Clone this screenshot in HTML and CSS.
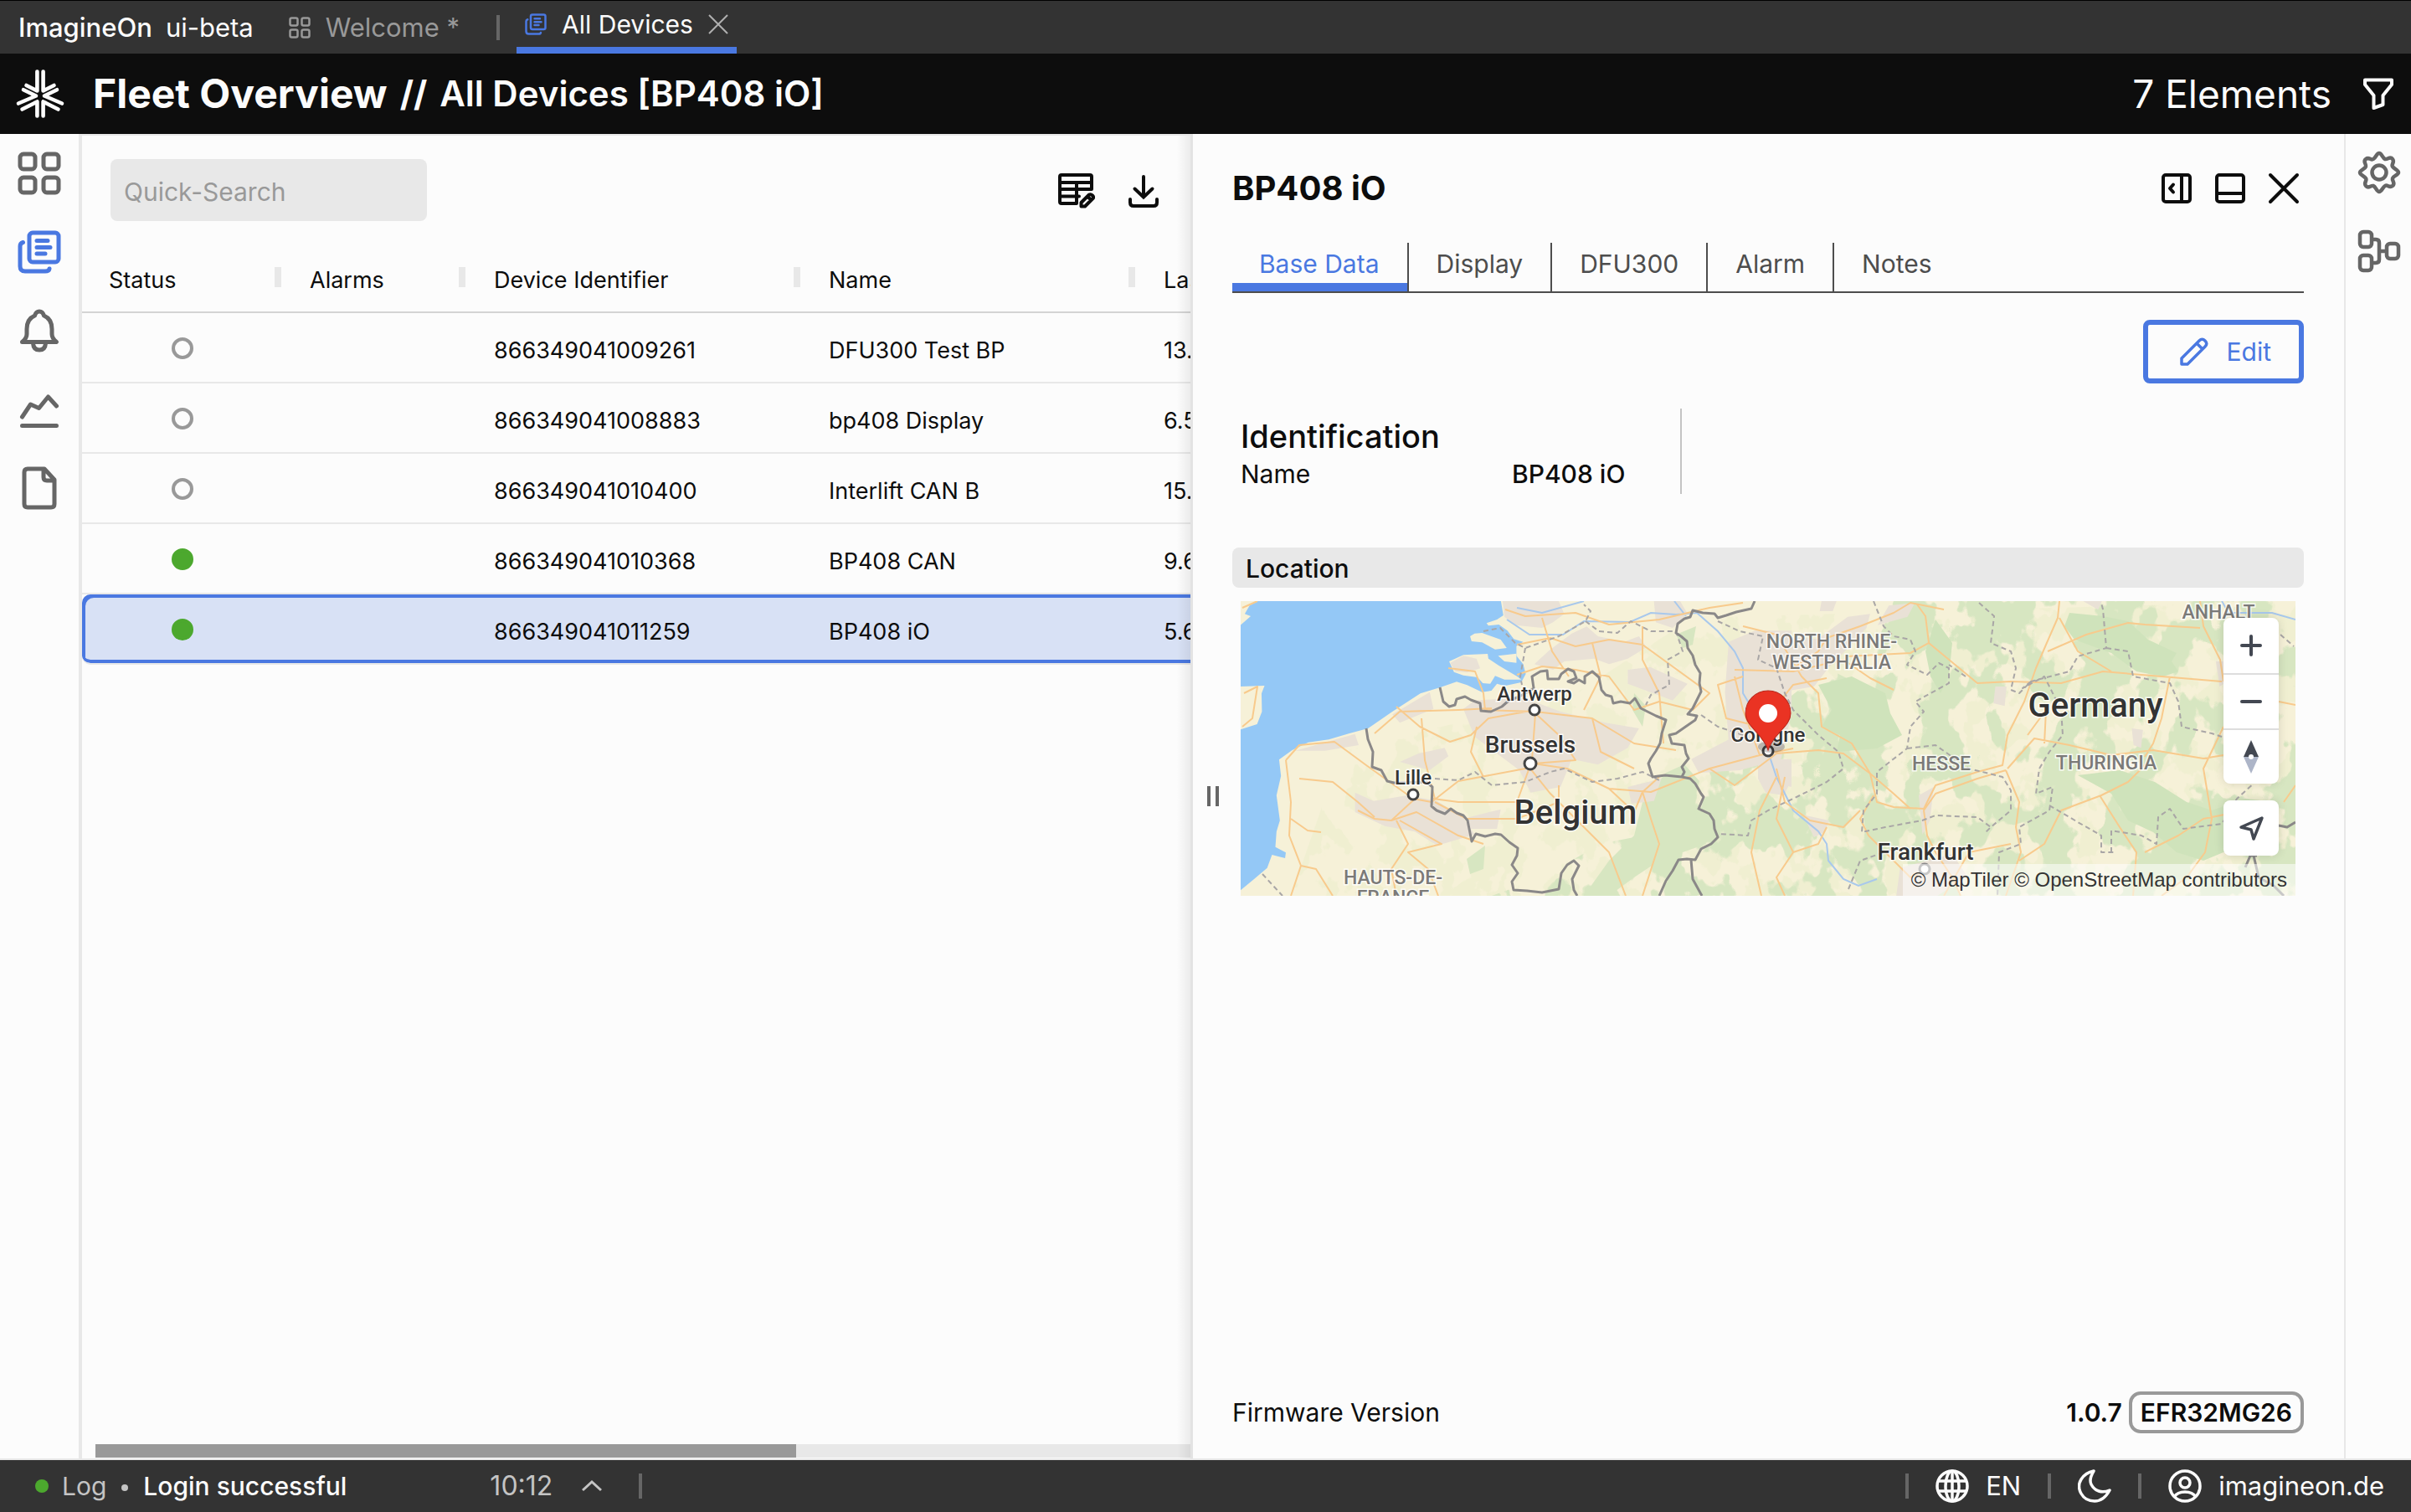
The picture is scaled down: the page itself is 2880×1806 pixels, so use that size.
FILE: index.html
```html
<!DOCTYPE html>
<html lang="en">
<head>
<meta charset="utf-8">
<title>ImagineOn – All Devices</title>
<link rel="stylesheet" href="styles.css">
</head>
<body>
<svg class="defs" aria-hidden="true">
  <symbol id="i-grid" viewBox="0 0 52 52"><g fill="none" stroke="currentColor" stroke-width="5"><rect x="3" y="3" width="18" height="18" rx="4"/><rect x="31" y="3" width="18" height="18" rx="4"/><rect x="3" y="31" width="18" height="18" rx="4"/><rect x="31" y="31" width="18" height="18" rx="4"/></g></symbol>
  <symbol id="i-docs" viewBox="0 0 52 52"><g fill="none" stroke="currentColor" stroke-width="5" stroke-linecap="round"><rect x="14" y="3" width="35" height="35" rx="4"/><path d="M6.500 14.500Q3 15.500 3 19V43Q3 49 9 49H33Q37.500 49 38 46M23 12.500H36M23 20.500H39M23 28H33"/></g></symbol>
</svg>
<div class="app">
  <header class="titlebar">
    <span class="brand">ImagineOn</span>
    <span class="env">ui-beta</span>
    <nav class="wintabs">
      <a class="wintab" href="#welcome"><svg class="ic26"><use href="#i-grid"/></svg>Welcome *</a>
      <span class="divider"></span>
      <span class="wintab wintab-active"><svg class="ic26 blue"><use href="#i-docs"/></svg><a href="#devices">All Devices</a>
        <button class="plain" aria-label="Close tab"><svg class="ic24" viewBox="0 0 24 24"><path d="M1 1 23 23M23 1 1 23" stroke="#b0b0b0" stroke-width="2"/></svg></button></span>
    </nav>
  </header>

  <div class="pagehead">
    <svg class="logo" viewBox="0 0 80 80" fill="none" stroke="#fcfcfc" stroke-width="4.600" stroke-linecap="round" stroke-linejoin="round">
      <path d="M36.400 13.500V36.500L23.500 30M20 35.200 35 42.500 14 51.500M18.500 58.500 36.400 49.500V66.500M36.400 49.500 33 51"/>
      <path d="M43.600 13.500V36.500L56.500 30M60 35.200 45 42.500 66 51.500M61.500 58.500 43.600 49.500V66.500M43.600 49.500 47 51"/>
    </svg>
    <h1>Fleet Overview</h1><span class="slashes">//</span><h2>All Devices [BP408 iO]</h2>
    <span class="count">7 Elements</span>
    <button class="plain" aria-label="Filter"><svg class="ic38" viewBox="0 0 38 38" fill="none" stroke="#fcfcfc" stroke-width="4" stroke-linejoin="round"><path d="M3 2.500H35V8L24.500 21V32L13.500 36V21L3 8Z"/></svg></button>
  </div>

  <main class="body">
    <nav class="rail">
      <a href="#dashboard" aria-label="Dashboard"><svg class="ic52"><use href="#i-grid"/></svg></a>
      <a class="blue" href="#devices" aria-label="Devices"><svg class="ic52"><use href="#i-docs"/></svg></a>
      <a href="#alarms" aria-label="Alarms"><svg class="ic52" viewBox="0 0 52 52" fill="none" stroke="currentColor" stroke-width="5" stroke-linejoin="round"><path d="M5.500 39.500Q11 35 11 30V24Q11 12 20.500 8Q22 3 26 3T31.500 8Q41 12 41 24V30Q41 35 46.500 39.500ZM18.500 41Q19 49 26 49T33.500 41"/></svg></a>
      <a href="#reports" aria-label="Reports"><svg class="ic52" viewBox="0 0 52 52" fill="none" stroke="currentColor" stroke-width="5" stroke-linecap="round" stroke-linejoin="round"><path d="M5.500 35 15.500 20 25.500 24.500 36.500 11 46.500 22M5.500 45.500H46.500"/></svg></a>
      <a href="#files" aria-label="Files"><svg class="ic52" viewBox="0 0 52 52" fill="none" stroke="currentColor" stroke-width="5" stroke-linejoin="round"><path d="M12 3H32L44 16V45Q44 49 40 49H12Q8 49 8 45V7Q8 3 12 3ZM31 4V13Q31 17 35 17H43"/></svg></a>
    </nav>

    <section class="list">
      <div class="toolbar">
        <input class="search" type="text" placeholder="Quick-Search" aria-label="Quick-Search">
        <button class="plain" aria-label="Edit columns"><svg class="ic44" viewBox="0 0 44 44" fill="none" stroke="#0d0d0d" stroke-width="4" stroke-linejoin="round" stroke-linecap="round"><path d="M22 38H4Q2 38 2 36V6Q2 4 4 4H38Q40 4 40 6V21H2M2 13H40M22 13V38M2 29.500H25M27.500 41.500V37L37 27.500Q39 26.500 41 28.500T41.500 32L32 41.500ZM35.500 30 38.500 33"/></svg></button>
        <button class="plain" aria-label="Download"><svg class="ic44" viewBox="0 0 44 44" fill="none" stroke="#0d0d0d" stroke-width="4" stroke-linecap="round"><path d="M22 6V30M11.500 20.500 22 30.500 32.500 20.500M6 33V37Q6 41 10 41H34Q38 41 38 37V33"/></svg></button>
      </div>
      <div class="gridwrap">
        <table class="devices">
          <colgroup><col class="c240"><col class="c220"><col class="c400"><col class="c400"><col class="c400"></colgroup>
          <thead><tr><th>Status</th><th>Alarms</th><th>Device Identifier</th><th>Name</th><th>Last</th></tr></thead>
          <tbody>
            <tr><td><span class="dot"></span></td><td></td><td>866349041009261</td><td>DFU300 Test BP</td><td>13.5.</td></tr>
            <tr><td><span class="dot"></span></td><td></td><td>866349041008883</td><td>bp408 Display</td><td>6.5.</td></tr>
            <tr><td><span class="dot"></span></td><td></td><td>866349041010400</td><td>Interlift CAN B</td><td>15.5.</td></tr>
            <tr><td><span class="dot on"></span></td><td></td><td>866349041010368</td><td>BP408 CAN</td><td>9.6.</td></tr>
            <tr class="selected"><td><span class="dot on"></span></td><td></td><td>866349041011259</td><td>BP408 iO</td><td>5.6.</td></tr>
          </tbody>
        </table>
      </div>
      <div class="hscroll"><span></span></div>
    </section>

    <section class="panel">
      <div class="grip"></div>
      <div class="panelhead">
        <h3>BP408 iO</h3>
        <button class="plain" aria-label="Dock right"><svg class="ic36" viewBox="0 0 36 36" fill="none" stroke="#0d0d0d" stroke-width="4" stroke-linejoin="round"><rect x="2" y="2" width="32" height="32" rx="3"/><path d="M24 2V34M14 13.500 10 18 14 22.500" stroke-linecap="round"/></svg></button>
        <button class="plain" aria-label="Dock bottom"><svg class="ic36" viewBox="0 0 36 36" fill="none" stroke="#0d0d0d" stroke-width="4"><rect x="2" y="2" width="32" height="32" rx="3"/><path d="M2 24H34"/></svg></button>
        <button class="plain" aria-label="Close panel"><svg class="ic36" viewBox="0 0 36 36" stroke="#0d0d0d" stroke-width="4" stroke-linecap="round"><path d="M2 2 34 34M34 2 2 34"/></svg></button>
      </div>
      <nav class="tabs">
        <a class="tab active" href="#base">Base Data</a><a class="tab" href="#display">Display</a><a class="tab" href="#dfu">DFU300</a><a class="tab" href="#alarm">Alarm</a><a class="tab" href="#notes">Notes</a>
      </nav>
      <button class="edit"><svg class="ic34" viewBox="0 0 34 34" fill="none" stroke="currentColor" stroke-width="3.500" stroke-linejoin="round"><path d="M2 32V25L23 4Q26.500 0.500 30 4T30 11L9 32ZM20 7 27 14"/></svg>Edit</button>
      <div class="ident">
        <h4>Identification</h4>
        <dl><dt>Name</dt><dd>BP408 iO</dd></dl>
      </div>
      <h5 class="sectionbar">Location</h5>
      <div class="map">
        <svg class="mapart" viewBox="0 0 1260 352" preserveAspectRatio="xMidYMid slice">
          <defs>
            <filter id="woods" x="0" y="0" width="1" height="1" color-interpolation-filters="sRGB"><feTurbulence type="fractalNoise" baseFrequency=".022 .017" numOctaves="4" seed="8"/><feColorMatrix values="0 0 0 0 .843 0 0 0 0 .902 0 0 0 0 .757 26 0 0 0 -12.600"/><feComposite in2="SourceGraphic" operator="in"/></filter>
            <filter id="meadow" x="0" y="0" width="1" height="1" color-interpolation-filters="sRGB"><feTurbulence type="fractalNoise" baseFrequency=".03 .024" numOctaves="4" seed="21"/><feColorMatrix values="0 0 0 0 .937 0 0 0 0 .937 0 0 0 0 .816 26 0 0 0 -13"/><feComposite in2="SourceGraphic" operator="in"/></filter>
          </defs>
          <rect width="1260" height="352" fill="#f6f1d8"/>
          <!-- vegetation -->
          <path filter="url(#meadow)" d="M120 180 400 110 540 20 1260 0V352H60Z" opacity=".8"/>
          <path filter="url(#woods)" d="M520 240 560 190 700 80 740 100 780 0H1260V352H300L360 330 430 290 480 280Z"/>
          <path fill="#cfe3bb" d="M990 14 1030 18 1060 24 1084 46 1118 62 1112 72 1120 84 1102 90 1070 84 1040 62 996 46 984 30ZM1000 208 1050 202 1092 216 1130 240 1160 250 1200 236 1240 240 1220 270 1174 300 1150 310 1118 300 1090 276 1060 262 1040 230ZM690 100 730 90 770 110 776 134 790 160 760 176 712 180 716 160 694 150 706 130ZM830 22 850 50 846 90 836 110 824 90 818 60Z"/>
          <path fill="#d7e6c1" d="M508 205 530 195 548 215 540 245 556 290 500 310 470 330 440 352H410L440 310 470 280 480 240ZM270 308 292 292 290 320 274 326ZM470 110 484 125 480 150 468 130ZM520 40 544 30 540 52 528 56Z"/>
          <!-- built-up areas -->
          <g transform="translate(-42 -98) scale(.4464 .3333)" fill="#e9e1d6">
            <path d="M795 294H945L960 340 930 370 900 390 830 380 800 350ZM980 410 1020 385 1050 420 1120 440 1160 420 1180 460 1130 500 1080 520 1040 500 960 510 930 540 880 520 920 470 950 440ZM1200 294H1270L1290 340 1250 390 1205 370ZM1130 540 1190 530 1240 560 1290 590 1250 650 1190 620 1130 590ZM650 520 690 495 730 520 710 555 680 560ZM690 680 720 650 850 640 950 690 1070 730 1160 750 1130 820 1050 880 980 860 950 960 870 980 840 900 780 840 720 780ZM520 870 570 840 640 820 650 850 600 900ZM400 980 450 1010 540 990 620 1010 690 1070 720 1130 620 1170 560 1120 480 1100 400 1050ZM1130 960 1220 930 1200 1010 1140 1020ZM700 1070 790 1040 780 1110 710 1110ZM1400 440 1470 400 1568 400V700L1540 860 1430 900 1400 800 1390 620ZM500 700 600 620 610 680 520 730ZM240 830 400 770 410 810 320 830ZM1300 860 1400 790 1480 840 1430 900 1320 910ZM1490 860H1568V960L1510 940Z"/>
          </g>
          <g transform="translate(618 -98) scale(.4464 .3333)" fill="#e9e1d6">
            <path d="M0 440 60 420 160 430 240 350 300 340 290 390 250 450 190 530 150 600 60 620 0 600ZM320 380 350 310 420 300 400 350ZM170 294H210L200 330H165ZM635 600H665L660 670 630 660ZM0 860 60 870 90 930 70 990 20 980 0 930ZM430 990 470 960 460 1080 440 1130ZM120 1060 190 1080 180 1120 150 1140ZM1000 750 1030 755 1025 820 1005 810ZM1225 510H1260V580L1235 600ZM870 294H920L910 325ZM380 1250 520 1200 560 1280 480 1350H370Z"/>
          </g>
          <!-- sea and islands -->
          <g transform="translate(-42 -98) scale(.4464 .3333)">
            <path fill="#94c8f6" d="M94 290H790L797 345 780 360 752 373 757 382 785 378 808 400 825 430 850 440 832 455 832 490 850 520 857 555 845 585 800 598 780 590 765 615 740 620 700 595 672 583 630 602 575 625 500 690 435 750 385 768 330 790 275 800 232 828 197 862 202 920 190 990 199 1080 190 1120 187 1175 215 1195 213 1215 178 1203 165 1250 130 1290 94 1330Z"/>
            <path fill="#f6f1d8" d="M708 420 720 410 740 408 790 432 806 462 775 467 740 442 712 438ZM652 510 690 487 755 483 757 500 785 525 835 565 845 575 800 575 775 562 762 590 742 588 728 567 690 560 665 548ZM783 490 832 482 832 515 800 510ZM94 600 158 597 150 625 151 690 138 735 94 754ZM94 294H140L118 310 105 340 121 348 94 380Z"/>
            <path fill="#e9e1d6" d="M655 515 690 490 725 500 735 535 700 550 668 545Z"/>
          </g>
          <!-- rivers -->
          <path fill="none" stroke="#a8c8ec" stroke-width="2" d="M318 22 345 40 385 40 410 24 465 25 490 14 520 16 545 14 570 36 590 60 600 80 600 110 612 130 630 180 640 210 660 250 690 275 700 290 702 310 720 332 738 340 760 332M330 8 360 14 410 0M1172 0 1180 14 1232 14 1260 22M518 0 532 18"/>
          <!-- roads -->
          <g fill="none" stroke="#f8ca8c" stroke-width="2" stroke-linejoin="round">
            <path d="M316 10 340 18 400 14 440 28 500 22 560 8 600 2M330 52 370 44 400 54 440 46 480 52 560 110 540 130 500 120 470 130 440 90 400 82 360 78 330 88M360 20 372 60 392 90M420 50 430 90 410 130M480 30 480 70 500 110 505 170M248 80 280 84 290 110 292 130 352 132 420 140 470 170 520 178M160 158 190 132 260 130 300 128M186 126 214 150 250 168 275 160 296 140 352 130M352 134 348 190 340 200 260 215 228 240 206 236 150 196 112 168 70 172 54 190M352 134 380 160 400 190 350 194 390 200 440 224 490 228 560 200 620 184 660 176M230 236 260 240 330 240 346 196M216 140 220 190 232 236M232 240 270 260 330 260 380 240 380 220M346 200 370 230 410 270 440 300 460 352M206 238 180 262 160 260 140 250M186 262 200 290 180 320 186 352M190 262 240 290 200 300 224 320 236 352M54 190 60 240 58 280 72 316 60 352M72 316 90 320 110 352M60 260 80 274 96 276M70 212 110 216 140 240 160 258M180 262 210 252 260 280 290 290M480 228 490 260 500 290 480 352M440 224 470 252 480 228 500 210M560 200 590 220 640 182M2 8 20 0M4 110 20 102 14 140 2 150M420 140 430 180 470 200M282 150 275 180 290 210M600 90 570 100 580 140 620 150 660 100 700 92M590 90 600 130 620 184M640 182 690 178 720 182 752 206 780 230 800 248"/>
            <path d="M600 30 640 40 670 90 690 110 694 150 730 170 752 206 760 240 780 246 816 248 830 220 880 204 910 196 916 160 936 120 950 80 962 52 976 20 978 0M660 80 690 60 700 44 740 30 780 14 800 2 840 10M590 82 660 84 720 70 752 92 780 106M724 66 800 62 822 50 818 18 808 4M822 50 880 98 920 96 980 98 1030 84 1100 90 1172 96M964 60 1010 40 1060 26 1080 28 1146 32M978 20 1000 60 1040 84M1146 0 1150 30 1170 70 1174 96M1110 90 1100 140 1090 170 1080 186M916 200 948 164 990 172 1040 184 1090 178 1150 188 1174 184M914 202 930 240 926 270 932 300 914 352M960 170 962 130 940 160M914 202 880 212 830 230 816 250 820 280 830 300 850 330 860 352M756 232 740 260 750 280 800 330 820 320M1090 186 1060 216 1028 232 980 250 960 290 930 310M1026 232 1050 270 1070 300 1066 352M1174 150 1150 200 1160 260 1152 300 1130 330 1100 352M640 200 650 240 680 262 720 270 740 250M650 210 640 260 660 300 690 290 700 270M660 300 640 330 650 352M1240 120 1260 124M1246 240 1260 220M1080 300 1120 280 1150 260 1200 250M840 352 870 300 920 290M622 352 610 300 620 250 640 210"/>
          </g>
          <!-- regional boundaries -->
          <g fill="none" stroke="#a9a6a6" stroke-width="2" stroke-dasharray="6 4" stroke-linejoin="round">
            <path d="M290 36 310 32 328 50 340 56 380 42 412 24 418 12 410 4M412 24 428 36 450 38 466 24 490 36 520 36 528 60 510 70 512 100 490 112 484 124M340 56 334 90 336 100M232 212 260 214 280 204 300 220 340 216 370 204 386 200 420 216 450 212 480 204 500 214M570 24 596 36 624 42 618 70 640 80 650 110 660 130 690 160 714 180 720 200 700 216 660 236 630 250 610 262 606 280 570 278M550 136 570 150 600 160M26 326 50 352M756 0 768 30 780 42 800 46 806 60 796 76 820 88 834 74 846 80 846 98 806 120 816 132 800 150 796 176 760 204 760 230 744 250 742 276 770 270 814 262 830 256 880 258 896 270M882 2 900 18 896 50 920 60 926 80 920 106 930 110 944 96 990 84 1000 66 1034 56 1030 10 1028 2M866 90 846 76M1034 56 1060 60 1066 90 1110 98 1120 120 1124 150 1160 158 1172 162M944 96 934 104 960 90 980 130 982 160 966 180 954 200 950 230 970 222 966 250 930 270 932 290 906 300 904 352M796 176 830 172 870 200 910 210 920 226 920 250 896 270 890 276M966 244 1000 264 1028 280 1028 300 1044 300M1040 300 1040 274 1076 280 1094 290 1096 258 1110 248 1126 272 1172 266 1190 236 1212 216M726 344 740 310 780 296M1242 40 1258 54"/>
          </g>
          <!-- national borders -->
          <g fill="none" stroke="#8a8888" stroke-width="3" stroke-linejoin="round">
            <path d="M238 103 242 120 249 126 256 124 258 117 268 114 275 118 286 122 287 131 299 132 312 126 320 119 333 114 350 104 348 90 358 84 366 83 367 93 380 93 383 87 391 81 398 84 401 92 391 96 398 98 404 94 411 98 411 90 420 84 428 91 431 106 436 112 443 114 445 122 454 120 465 122 471 116 478 128 490 134 496 137 508 142 503 158 501 170 496 179 490 188 487 194 492 210 507 208 527 210M150 152 152 165 158 180 157 198 168 202 175 215 183 217 222 216 229 222 228 245 234 250 244 254 251 248 258 253 266 256 271 262 276 287 281 278 292 281 304 278 311 279 321 288 331 295 330 304 324 315 331 325 324 335 326 345 342 346 360 348 380 344 383 325 390 315 398 310 404 316 396 332 398 345 402 352M614 0 610 9 592 13 580 17 570 20 566 15 552 14 540 11 537 19 530 21 522 27 520 38 526 42 533 48 534 56 540 65 543 76 549 86 548 98 550 108 545 118 540 128 534 135 545 137 543 142 530 151 520 158 512 160 515 170 530 172 532 182 535 188 527 198 530 204 527 210 537 212 543 218 550 230 553 234 547 248 560 254 565 262 566 272 570 282 562 290 550 296 543 309 533 308 523 309 516 322 508 334 500 352M538 309 540 332 551 352M1210 304 1216 330 1234 340 1246 352M1240 268 1250 270 1260 264M1200 318 1206 304 1214 304"/>
          </g>
          <g fill="#fff" stroke="#444" stroke-width="3"><circle cx="351" cy="130" r="6"/><circle cx="346" cy="194" r="7"/><circle cx="206" cy="231" r="6"/><circle cx="630" cy="179" r="6"/><circle cx="817" cy="320" r="6" stroke="#888"/></g>
          <g class="lbl">
            <text class="region" x="706" y="56">NORTH RHINE-</text><text class="region" x="706" y="81">WESTPHALIA</text>
            <text class="region" x="1168" y="21">ANHALT</text><text class="region" x="837" y="202">HESSE</text><text class="region" x="1034" y="201">THURINGIA</text>
            <text class="region" x="182" y="338">HAUTS-DE-</text><text class="region" x="182" y="362">FRANCE</text>
            <text class="city" x="351" y="119">Antwerp</text><text class="city" x="206" y="219">Lille</text><text class="city" x="630" y="168">Cologne</text>
            <text class="capital" x="346" y="181">Brussels</text><text class="capital" x="818" y="309">Frankfurt</text>
            <text class="country" x="400" y="266">Belgium</text><text class="country" x="1021" y="138">Germany</text>
          </g>
          <ellipse cx="634" cy="174" rx="16" ry="7" fill="#000" opacity=".2"/>
          <path d="M630 178C624 158 603 150 603 134A27 27 0 0 1 657 134C657 150 636 158 630 178Z" fill="#ea3323" stroke="#b9271a" stroke-width="1"/><circle cx="630" cy="134" r="11" fill="#fff"/>
        </svg>
        <div class="mapctl">
          <div class="ctlgroup">
            <button aria-label="Zoom in"><svg class="ic36" viewBox="0 0 36 36" stroke="#434852" stroke-width="4" stroke-linecap="round"><path d="M18 7V29M7 18H29"/></svg></button>
            <button aria-label="Zoom out"><svg class="ic36" viewBox="0 0 36 36" stroke="#434852" stroke-width="4" stroke-linecap="round"><path d="M7 18H29"/></svg></button>
            <button aria-label="Reset bearing"><svg class="ic36" viewBox="0 0 36 36"><path d="M18-2 27 18H9Z" fill="#434852"/><path d="M18 38 27 18H9Z" fill="#adb5c8"/><circle cx="18" cy="18" r="3" fill="#fff"/></svg></button>
          </div>
          <div class="ctlgroup">
            <button aria-label="Find my location"><svg class="ic36" viewBox="0 0 36 36" fill="none" stroke="#434852" stroke-width="3.500" stroke-linejoin="round"><path d="M31 6 6 17 18 20 21 31Z"/></svg></button>
          </div>
        </div>
        <div class="attrib"><a href="#maptiler">© MapTiler</a> <a href="#osm">© OpenStreetMap contributors</a></div>
      </div>
      <div class="firmware"><span>Firmware Version</span><b>1.0.7</b><b class="chip">EFR32MG26</b></div>
    </section>

    <nav class="rail rail-right">
      <a href="#settings" aria-label="Settings"><svg class="ic52" viewBox="0 0 52 52" fill="none" stroke="currentColor" stroke-width="4.500" stroke-linejoin="round"><path d="M26 3C29 3 30 9 33 10S39 6 42 10 40 16 42 19 49 23 49 26 43 30 42 33 46 39 42 42 36 40 33 42 29 49 26 49 22 43 19 42 13 46 10 42 12 36 10 33 3 29 3 26 9 22 10 19 6 13 10 10 16 12 19 10 23 3 26 3Z"/><circle cx="26" cy="26" r="8.500"/></svg></a>
      <a href="#topology" aria-label="Topology"><svg class="ic52" viewBox="0 0 52 52" fill="none" stroke="currentColor" stroke-width="4.500"><rect x="3" y="3" width="14" height="18" rx="4"/><rect x="3" y="31" width="14" height="18" rx="4"/><rect x="35" y="17" width="14" height="18" rx="4"/><path d="M17 12H22Q26 12 26 16V36Q26 40 22 40H17M26 26H35"/></svg></a>
    </nav>
  </main>

  <footer class="statusbar">
    <span class="led"></span><span class="muted">Log</span><span class="bullet"></span><span class="msg">Login successful</span>
    <span class="muted time">10:12</span>
    <button class="plain" aria-label="Show log"><svg class="ic24" viewBox="0 0 24 24" fill="none" stroke="#c4c4c4" stroke-width="3"><path d="M1 17 12 7 23 17"/></svg></button>
    <span class="divider"></span>
    <span class="spacer"></span>
    <span class="divider"></span>
    <button class="plain item"><svg class="ic40" viewBox="0 0 40 40" fill="none" stroke="currentColor" stroke-width="3.500"><circle cx="20" cy="20" r="18"/><ellipse cx="20" cy="20" rx="8" ry="18"/><path d="M20 2V38M3 14H37M3 26H37"/></svg>EN</button>
    <span class="divider"></span>
    <button class="plain item" aria-label="Dark mode"><svg class="ic40" viewBox="0 0 40 40" fill="none" stroke="currentColor" stroke-width="3.500" stroke-linejoin="round"><path d="M19 2Q9 4 4 12T4 29 20 38 38 25Q31 28 25 26T16 18 19 2Z"/></svg></button>
    <span class="divider"></span>
    <button class="plain item"><svg class="ic40" viewBox="0 0 40 40" fill="none" stroke="currentColor" stroke-width="3.500"><circle cx="20" cy="20" r="18"/><circle cx="20" cy="16" r="6"/><path d="M7 33Q11 27 20 27T33 33"/></svg>imagineon.de</button>
  </footer>
</div>
</body>
</html>
```
FILE: styles.css
```css
* { box-sizing: border-box; }
body { margin: 0; background: #fcfcfc; color: #0d0d0d; font: 30px/40px Inter, sans-serif; }
h1, h2, h3, h4, h5, dl, dd { margin: 0; }
a { color: inherit; text-decoration: none; }
svg { display: block; flex: none; }
.defs { position: absolute; width: 0; height: 0; }
.plain { display: flex; align-items: center; margin: 0; padding: 0; border: 0; background: none; color: inherit; font: inherit; }
.ic24 { width: 24px; height: 24px; }
.ic26 { width: 26px; height: 26px; }
.ic34 { width: 34px; height: 34px; }
.ic36 { width: 36px; height: 36px; overflow: visible; }
.ic38 { width: 38px; height: 38px; }
.ic40 { width: 40px; height: 40px; }
.ic44 { width: 44px; height: 44px; }
.ic52 { width: 52px; height: 52px; }
.blue { color: #4a78e1; }
.divider { width: 4px; height: 30px; background: #666; }

.app { display: flex; flex-direction: column; min-height: 100vh; }

.titlebar { display: flex; height: 64px; padding-left: 22px; border-top: 1px solid #000; background: #333; color: #fcfcfc; font-size: 31px; line-height: 64px; }
.brand { margin-right: 16px; font-weight: 500; }
.env { margin-right: 42px; }
.wintabs { display: flex; align-items: center; }
.wintab { display: flex; align-items: center; gap: 18px; color: #999; }
.wintabs > .divider { margin: 0 20px 0 44px; }
.wintab-active { height: 63px; padding: 0 10px; border-bottom: 8px solid #4a78e1; color: #fcfcfc; font-size: 30px; line-height: 54px; }

.pagehead { display: flex; align-items: center; height: 96px; padding: 0 20px 0 8px; background: #0d0d0d; color: #fcfcfc; line-height: 56px; }
.logo { width: 80px; height: 80px; margin-right: 23px; }
h1 { font-size: 48px; font-weight: 700; }
.slashes { margin: 0 15px; font-size: 42px; font-weight: 700; }
h2 { font-size: 42px; font-weight: 600; }
.count { margin: 0 37px 0 auto; font-size: 46px; }

.body { flex: 1; display: grid; grid-template-columns: 98px minmax(0, 49fr) minmax(0, 51fr) 80px; }
.rail { display: flex; flex-direction: column; align-items: center; gap: 42px; padding-top: 21px; border-right: 4px solid #e8e8e8; color: #666; }
.rail .blue { color: #4a78e1; }
.rail-right { border-right: 0; border-left: 2px solid #e8e8e8; padding: 20px 0 0 2px; }

.list { position: relative; display: flex; flex-direction: column; border-top: 2px solid #e8e8e8; }
.list::after { content: ""; position: absolute; top: 0; right: 0; bottom: 0; width: 16px; background: linear-gradient(to right, #0000, #0001); pointer-events: none; }
.toolbar { display: flex; align-items: center; gap: 36px; padding: 28px 34px 26px; }
.search { width: 378px; height: 74px; margin-right: auto; padding: 4px 16px 0; border: 0; border-radius: 8px; background: #e8e8e8; color: #0d0d0d; font: inherit; }
.search::placeholder { color: #999; }
.gridwrap { flex: 1; overflow: hidden; }
.devices { width: 1660px; table-layout: fixed; border-spacing: 0; font-size: 27px; }
.c240 { width: 240px; }
.c220 { width: 220px; }
.c400 { width: 400px; }
.devices th, .devices td { height: 84px; padding: 7px 0 0 32px; border-bottom: 2px solid #e8e8e8; text-align: left; font-weight: 400; }
.devices th { border-color: #d4d4d4; background: linear-gradient(#e8e8e8, #e8e8e8) right 2px center / 8px 24px no-repeat; }
.devices td:first-child { padding: 2px 0 0; }
.dot { display: block; width: 26px; height: 26px; margin: 0 auto; border: 4px solid #999; border-radius: 50%; }
.dot.on { border-color: #4ca82e; background: #4ca82e; }
.selected td { background: #d8e1f5; box-shadow: inset 0 4px #4a78e1, inset 0 -4px #4a78e1; }
.selected td:first-child { border-radius: 10px 0 0 10px; box-shadow: inset 4px 4px #4a78e1, inset 0 -4px #4a78e1; }
.hscroll { height: 16px; margin: 0 0 1px 16px; background: #e8e8e8; }
.hscroll span { display: block; width: 64%; height: 16px; background: #999; }

.panel { position: relative; display: flex; flex-direction: column; padding: 38px 48px 30px 47px; border-left: 3px solid #e3e3e3; }
.grip { position: absolute; left: 17px; top: calc(50% - 12px); width: 14px; height: 24px; border: solid #666; border-width: 0 4px; }
.panelhead { display: flex; align-items: center; gap: 28px; height: 54px; padding-right: 6px; }
h3 { margin-right: auto; font-size: 40px; font-weight: 700; }
.tabs { display: flex; height: 60px; margin-top: 38px; border-bottom: 2px solid #4d4d4d; color: #4d4d4d; }
.tab { padding: 5px 33px 0 32px; border-right: 2px solid #4d4d4d; font-size: 30px; line-height: 40px; }
.tab + .tab { padding-left: 33px; }
.tab:last-child { border-right: 0; }
.tab.active { color: #4a78e1; box-shadow: inset 0 -10px #4a78e1; }
.edit { align-self: flex-end; display: flex; align-items: center; gap: 22px; height: 76px; margin-top: 32px; padding: 0 33px 0 38px; border: 6px solid #4a78e1; border-radius: 8px; background: none; color: #4a78e1; font: inherit; }
.ident { align-self: flex-start; width: 537px; height: 102px; margin: 30px 0 64px; padding: 8px 0 0 10px; border-right: 2px solid #c4c4c4; }
h4 { font-size: 38px; font-weight: 500; line-height: 50px; }
dl { display: grid; grid-template-columns: 324px auto; }
dd { font-weight: 500; }
.sectionbar { height: 48px; padding: 0 16px; border-radius: 8px; background: #e8e8e8; font-size: 30px; font-weight: 500; line-height: 50px; }
.map { position: relative; height: 352px; margin: 16px 10px 0; overflow: hidden; }
.mapart { width: 100%; height: 100%; }
.lbl text { font-family: Roboto, sans-serif; text-anchor: middle; paint-order: stroke; stroke: #fffc; stroke-width: 3px; fill: #333; font-weight: 500; }
.lbl .region { font-size: 23px; fill: #7b7a78; }
.lbl .city { font-size: 24px; }
.lbl .capital { font-size: 28px; }
.lbl .country { font-size: 40px; }
.mapctl { position: absolute; top: 20px; right: 20px; display: grid; gap: 20px; }
.ctlgroup { overflow: hidden; border-radius: 8px; background: #fff; box-shadow: 0 0 12px #0002; }
.ctlgroup button { display: grid; place-items: center; width: 66px; height: 66px; padding: 0; border: 0; background: none; }
.ctlgroup button + button { border-top: 2px solid #ddd; }
.attrib { position: absolute; right: 0; bottom: 0; padding: 0 10px; background: #fff8; color: #333; font: 24px/38px "Liberation Sans", Arial, sans-serif; }
.firmware { display: flex; align-items: center; gap: 8px; margin-top: auto; }
.firmware span { margin-right: auto; }
.firmware b { font-weight: 600; }
.firmware .chip { height: 50px; padding: 0 10px; border: 4px solid #999; border-radius: 14px; line-height: 42px; }

.statusbar { display: flex; align-items: center; height: 64px; padding: 0 32px 0 42px; border-top: 2px solid #e8e8e8; background: #333; color: #fcfcfc; }
.muted { color: #c4c4c4; }
.led { width: 16px; height: 16px; margin-right: 16px; border-radius: 50%; background: #4ca82e; }
.bullet { width: 8px; height: 8px; margin: 4px 18px 0; border-radius: 50%; background: #c4c4c4; }
.msg { width: 414px; font-weight: 500; }
.time { width: 88px; font-size: 32px; }
.time + .plain { margin: 0 44px 0 22px; }
.spacer { flex: 1; }
.item { gap: 20px; margin: 0 32px; font-size: 31px; }
.item:last-child { margin-right: 0; }
```
